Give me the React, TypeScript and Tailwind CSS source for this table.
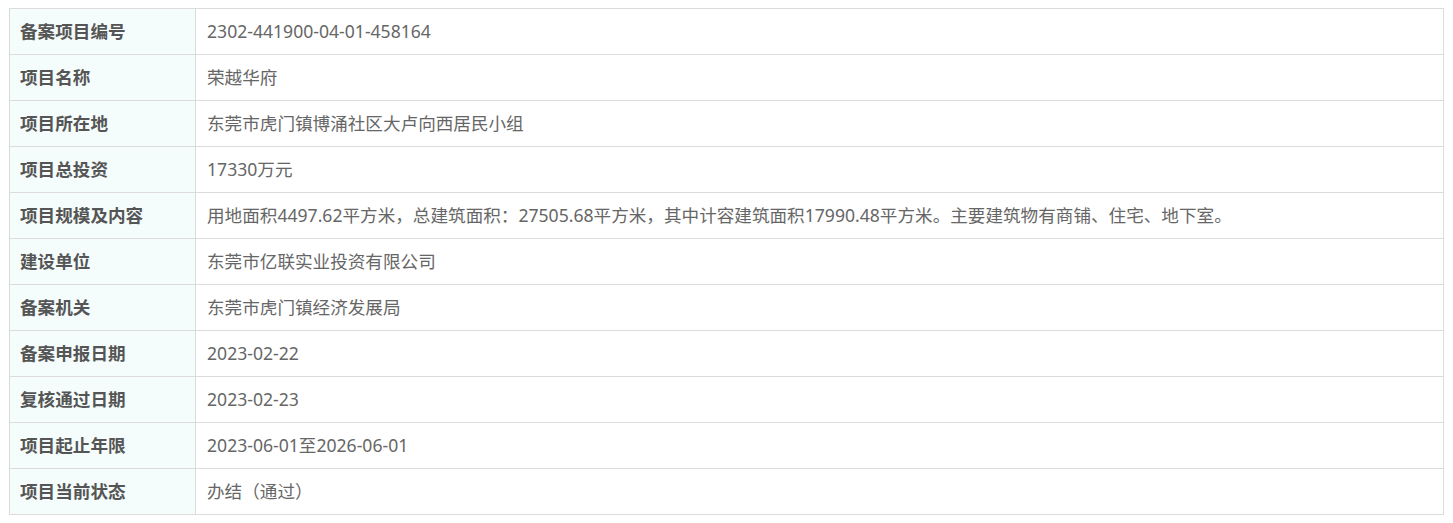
const rows: [string, string][] = [
  ["备案项目编号", "2302-441900-04-01-458164"],
  ["项目名称", "荣越华府"],
  ["项目所在地", "东莞市虎门镇博涌社区大卢向西居民小组"],
  ["项目总投资", "17330万元"],
  ["项目规模及内容", "用地面积4497.62平方米，总建筑面积：27505.68平方米，其中计容建筑面积17990.48平方米。主要建筑物有商铺、住宅、地下室。"],
  ["建设单位", "东莞市亿联实业投资有限公司"],
  ["备案机关", "东莞市虎门镇经济发展局"],
  ["备案申报日期", "2023-02-22"],
  ["复核通过日期", "2023-02-23"],
  ["项目起止年限", "2023-06-01至2026-06-01"],
  ["项目当前状态", "办结（通过）"],
]

export default function App() {
  return (
    <div className="bg-white pl-[9px] pt-[8px] pr-[9px] font-['Noto_Sans','Noto_Sans_CJK_SC',sans-serif] text-[17.6px] leading-[24px]">
      <table className="w-full border-collapse border border-[#dcdcdc]">
        <tbody>
          {rows.map(([k, v]) => (
            <tr key={k} className="h-[46px]">
              <td className="w-[186px] border border-[#dcdcdc] bg-[#f4fcfc] pl-[10px] pb-[2px] font-bold text-[#555]">
                {k}
              </td>
              <td className="border border-[#dcdcdc] pl-[11px] pb-[2px] text-[#666]">{v}</td>
            </tr>
          ))}
        </tbody>
      </table>
    </div>
  )
}
